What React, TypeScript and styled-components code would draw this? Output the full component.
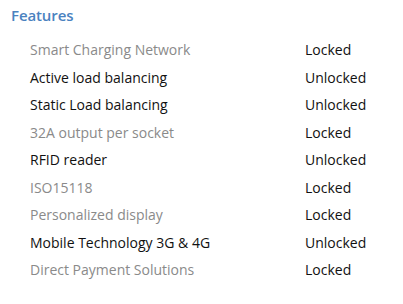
import React from "react";
import styled, { createGlobalStyle } from "styled-components";

const Global = createGlobalStyle`
  html, body { margin: 0; padding: 0; background: #fff; }
  body { font-family: "Open Sans", "Noto Sans", sans-serif; }
`;

const Panel = styled.section`
  width: 403px;
  height: 304px;
  box-sizing: border-box;
  padding: 4px 0 0 11px;
  background: #fff;
`;

const Heading = styled.h2`
  margin: 0 0 10px 0;
  font-size: 15px;
  font-weight: 600;
  line-height: 22px;
  letter-spacing: -0.1px;
  color: #4a82bf;
`;

const List = styled.div`
  display: flex;
  flex-direction: column;
  padding-left: 19px;
`;

const Row = styled.div`
  display: grid;
  grid-template-columns: 275px 1fr;
  height: 27.5px;
  align-items: center;
  font-size: 14px;
`;

const Name = styled.span<{ $locked: boolean }>`
  color: ${(p) => (p.$locked ? "#8a8a8a" : "#111")};
`;

const Status = styled.span`
  color: #111;
`;

const features: { name: string; locked: boolean }[] = [
  { name: "Smart Charging Network", locked: true },
  { name: "Active load balancing", locked: false },
  { name: "Static Load balancing", locked: false },
  { name: "32A output per socket", locked: true },
  { name: "RFID reader", locked: false },
  { name: "ISO15118", locked: true },
  { name: "Personalized display", locked: true },
  { name: "Mobile Technology 3G & 4G", locked: false },
  { name: "Direct Payment Solutions", locked: true },
];

export default function App() {
  return (
    <>
      <Global />
      <Panel>
        <Heading>Features</Heading>
        <List>
          {features.map((f) => (
            <Row key={f.name}>
              <Name $locked={f.locked}>{f.name}</Name>
              <Status>{f.locked ? "Locked" : "Unlocked"}</Status>
            </Row>
          ))}
        </List>
      </Panel>
    </>
  );
}
